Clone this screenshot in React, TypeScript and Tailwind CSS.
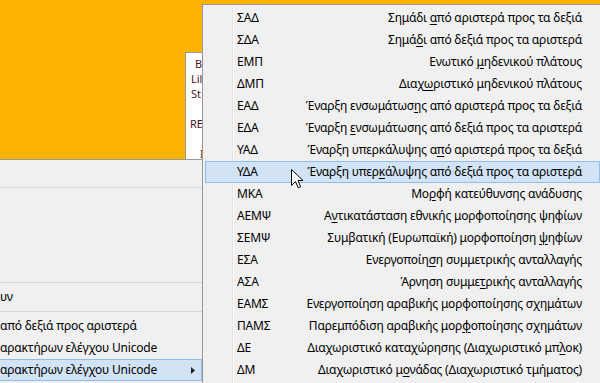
import React from "react";

type Item = { abbr: string; desc: React.ReactNode; active?: boolean };

const U = ({ children }: { children: React.ReactNode }) => (
  <span className="underline decoration-1 underline-offset-2">{children}</span>
);

const items: Item[] = [
  { abbr: "ΣΑΔ", desc: <>Σημάδι <U>α</U>πό αριστερά προς τα δεξιά</> },
  { abbr: "ΣΔΑ", desc: <>Σημά<U>δ</U>ι από δεξιά προς τα αριστερά</> },
  { abbr: "ΕΜΠ", desc: <>Ενωτικό <U>μ</U>ηδενικού πλάτους</> },
  { abbr: "ΔΜΠ", desc: <>Διαχ<U>ω</U>ριστικό μηδενικού πλάτους</> },
  { abbr: "ΕΑΔ", desc: <>Έναρξη ενσωμάτωσ<U>η</U>ς από αριστερά προς τα δεξιά</> },
  { abbr: "ΕΔΑ", desc: <>Έναρξη <U>ε</U>νσωμάτωσης από δεξιά προς τα αριστερά</> },
  { abbr: "ΥΑΔ", desc: <>Έναρξη υπερκάλυψης α<U>π</U>ό αριστερά προς τα δεξιά</> },
  { abbr: "ΥΔΑ", desc: <>Έναρξη υπερ<U>κ</U>άλυψης από δεξιά προς τα αριστερά</>, active: true },
  { abbr: "ΜΚΑ", desc: <>Μο<U>ρ</U>φή κατεύθυνσης ανάδυσης</> },
  { abbr: "ΑΕΜΨ", desc: <>Α<U>ν</U>τικατάσταση εθνικής μορφοποίησης ψηφίων</> },
  { abbr: "ΣΕΜΨ", desc: <>Συμβατική (Ευρωπαϊκή) μορφοποίηση <U>ψ</U>ηφίων</> },
  { abbr: "ΕΣΑ", desc: <>Ενεργοποίη<U>σ</U>η συμμετρικής ανταλλαγής</> },
  { abbr: "ΑΣΑ", desc: <>Άρνηση συμμε<U>τ</U>ρικής ανταλλαγής</> },
  { abbr: "ΕΑΜΣ", desc: <>Ενεργοποίηση αραβικής μορφοποίησης σ<U>χ</U>ημάτων</> },
  { abbr: "ΠΑΜΣ", desc: <>Παρεμπόδιση αραβικής μορ<U>φ</U>οποίησης σχημάτων</> },
  { abbr: "ΔΕ", desc: <>Διαχωριστικό καταχώρησης (Διαχωριστικό μπ<U>λ</U>οκ)</> },
  { abbr: "ΔΜ", desc: <>Διαχωριστικό μ<U>ο</U>νάδας (Διαχωριστικό τμήματος)</> },
];

const Sep = () => (
  <div className="h-[7px] flex items-center">
    <div className="h-px w-full bg-[#d7d7d7]" />
  </div>
);

const LRow = ({ children, active }: { children?: React.ReactNode; active?: boolean }) => (
  <div
    className={
      "h-[22px] flex items-center justify-between border pl-[39px] pr-[6px] " +
      (active ? "bg-[#d2e3f5] border-[#8fbdec]" : "border-transparent")
    }
  >
    <span className="whitespace-nowrap">{children}</span>
    {active && (
      <svg width="4" height="7" viewBox="0 0 4 7">
        <path d="M0 0 L4 3.5 L0 7 Z" fill="#222" />
      </svg>
    )}
  </div>
);

export default function App() {
  return (
    <div className="relative w-[600px] h-[383px] overflow-hidden bg-[#fdb300] font-['Noto_Sans',sans-serif] text-[12px] tracking-[-0.2px] text-black">
      {/* white document window behind the menus */}
      <div className="absolute left-[185px] top-[52px] w-[20px] h-[112px] bg-white border-l border-t border-[#9a9a9a] text-[#4a1226] text-[11px] tracking-normal leading-[15px] pt-[3px]">
        <div className="pl-[9px] whitespace-nowrap">B</div>
        <div className="pl-[5px] whitespace-nowrap">Lil</div>
        <div className="pl-[5px] whitespace-nowrap">St</div>
        <div className="h-[15px]" />
        <div className="pl-[4px] whitespace-nowrap">RE</div>
        <div className="h-[15px]" />
        <div className="pl-[14px] whitespace-nowrap">I</div>
      </div>

      {/* parent context menu */}
      <div className="absolute left-[-40px] top-[159px] w-[245px] h-[240px] bg-[#f0f0f0] border-t border-r border-[#979797] pt-[2px] pr-[2px]">
        <LRow />
        <Sep />
        <LRow />
        <LRow />
        <LRow />
        <LRow />
        <Sep />
        <LRow>υν</LRow>
        <Sep />
        <LRow>από δεξιά προς αριστερά</LRow>
        <LRow>αρακτήρων ελέγχου Unicode</LRow>
        <LRow active>αρακτήρων ελέγχου Unicode</LRow>
      </div>

      {/* submenu */}
      <div className="absolute left-[202px] top-[4px] w-[401px] h-[390px] bg-[#f0f0f0] border border-[#979797] p-[2px]">
        <div className="absolute left-[29px] top-0 bottom-0 w-px bg-[#e2e3e3]" />
        <div className="absolute left-[30px] top-0 bottom-0 w-px bg-white" />
        <div className="relative flex flex-col">
          {items.map((it) => (
            <div
              key={it.abbr}
              className={
                "h-[22px] flex items-center justify-between border pl-[31px] pr-[17px] " +
                (it.active ? "bg-[#d2e3f5] border-[#8fbdec]" : "border-transparent")
              }
            >
              <span className="whitespace-nowrap">{it.abbr}</span>
              <span className="whitespace-nowrap">{it.desc}</span>
            </div>
          ))}
        </div>
      </div>

      {/* mouse cursor */}
      <svg
        className="absolute left-[291px] top-[169px]"
        width="13"
        height="20"
        viewBox="0 0 13 20"
      >
        <path
          d="M0.5 0.5 L0.5 16.5 L4.5 12.5 L7.2 18.8 L9.6 17.8 L7 11.5 L12 11.5 Z"
          fill="#fff"
          stroke="#000"
          strokeWidth="1"
          strokeLinejoin="miter"
        />
      </svg>
    </div>
  );
}
